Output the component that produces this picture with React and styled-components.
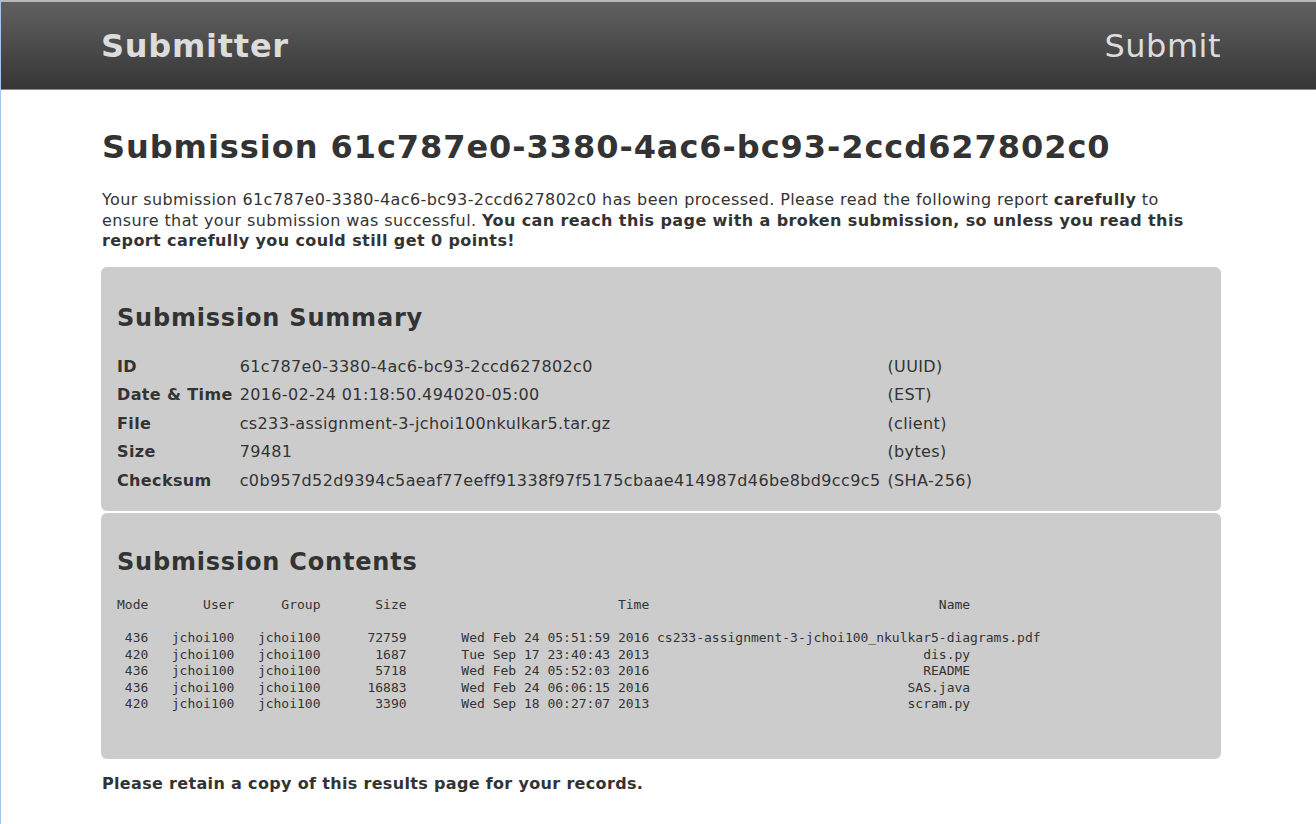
import React from 'react';
import styled, { createGlobalStyle } from 'styled-components';

const Global = createGlobalStyle`
  html, body { margin: 0; padding: 0; background: #fff; }
  body { font-family: "DejaVu Sans", Verdana, sans-serif; color: #333; }
`;

const Frame = styled.div`
  box-sizing: border-box;
  min-height: 824px;
  border-left: 1px solid #a4c6e8;
  border-top: 2px solid #b8b8b8;
`;

const Header = styled.header`
  height: 87px;
  background: linear-gradient(#606060, #363636);
  border-bottom: 1px solid #8a8a8a;
  display: flex;
  align-items: center;
`;

const Container = styled.div`
  width: 1120px;
  margin-left: 100px;
`;

const HeaderInner = styled(Container)`
  display: flex;
  justify-content: space-between;
  align-items: center;
`;

const Brand = styled.span`
  font-size: 32px;
  font-weight: bold;
  color: #dcdcdc;
  letter-spacing: 0.75px;
`;

const NavLink = styled.a`
  font-size: 32px;
  color: #dcdcdc;
  text-decoration: none;
  letter-spacing: 0.5px;
`;

const Title = styled.h1`
  margin: 37px 0 0;
  font-size: 32px;
  line-height: 40px;
  font-weight: bold;
  letter-spacing: 0.95px;
  padding-left: 1px;
`;

const Lead = styled.p`
  margin: 23px 0 0;
  padding: 0 12px 0 1px;
  font-size: 16px;
  line-height: 20.5px;
  letter-spacing: 0.4px;
`;

const Panel = styled.section`
  background: #cccccc;
  border-radius: 6px;
  padding: ${(p) => p.$pad};
  margin-top: ${(p) => p.$top};
`;

const PanelTitle = styled.h2`
  margin: 0;
  font-size: 24px;
  line-height: 28px;
  font-weight: bold;
  letter-spacing: 0.8px;
`;

const SummaryGrid = styled.div`
  display: grid;
  grid-template-columns: auto auto auto;
  justify-content: start;
  column-gap: 7px;
  margin-top: 21px;
  font-size: 16px;
  line-height: 28.5px;
  letter-spacing: 0.37px;
`;

const Label = styled.div`
  font-weight: bold;
`;

const Value = styled.div``;

const Listing = styled.pre`
  margin: 21px 0 0;
  font-family: "DejaVu Sans Mono", monospace;
  font-size: 13px;
  line-height: 16.5px;
  color: #333;
`;

const Footer = styled.p`
  margin: 15px 0 0;
  font-size: 16px;
  line-height: 20px;
  font-weight: bold;
  letter-spacing: 0.33px;
  padding-left: 1px;
`;

const summary = [
  ['ID', '61c787e0-3380-4ac6-bc93-2ccd627802c0', '(UUID)'],
  ['Date & Time', '2016-02-24 01:18:50.494020-05:00', '(EST)'],
  ['File', 'cs233-assignment-3-jchoi100nkulkar5.tar.gz', '(client)'],
  ['Size', '79481', '(bytes)'],
  ['Checksum', 'c0b957d52d9394c5aeaf77eeff91338f97f5175cbaae414987d46be8bd9cc9c5', '(SHA-256)'],
];

const files = [
  ['436', 'jchoi100', 'jchoi100', '72759', 'Wed Feb 24 05:51:59 2016', 'cs233-assignment-3-jchoi100_nkulkar5-diagrams.pdf'],
  ['420', 'jchoi100', 'jchoi100', '1687', 'Tue Sep 17 23:40:43 2013', 'dis.py'],
  ['436', 'jchoi100', 'jchoi100', '5718', 'Wed Feb 24 05:52:03 2016', 'README'],
  ['436', 'jchoi100', 'jchoi100', '16883', 'Wed Feb 24 06:06:15 2016', 'SAS.java'],
  ['420', 'jchoi100', 'jchoi100', '3390', 'Wed Sep 18 00:27:07 2013', 'scram.py'],
];

const fmt = (r) =>
  r[0].padStart(4) +
  r[1].padStart(11) +
  r[2].padStart(11) +
  r[3].padStart(11) +
  r[4].padStart(31) +
  ' ' +
  r[5].padStart(40);

const listing = [
  fmt(['Mode', 'User', 'Group', 'Size', 'Time', 'Name']),
  '',
  ...files.map(fmt),
].join('\n');

export default function App() {
  return (
    <Frame>
      <Global />
      <Header>
        <HeaderInner>
          <Brand>Submitter</Brand>
          <NavLink href="#">Submit</NavLink>
        </HeaderInner>
      </Header>
      <Container>
        <Title>Submission 61c787e0-3380-4ac6-bc93-2ccd627802c0</Title>
        <Lead>
          Your submission 61c787e0-3380-4ac6-bc93-2ccd627802c0 has been processed. Please read the
          following report <b>carefully</b> to ensure that your submission was successful.{' '}
          <b>
            You can reach this page with a broken submission, so unless you read this report
            carefully you could still get 0 points!
          </b>
        </Lead>
        <Panel $top="15px" $pad="37px 16px 16px">
          <PanelTitle>Submission Summary</PanelTitle>
          <SummaryGrid>
            {summary.map(([k, v, u]) => (
              <React.Fragment key={k}>
                <Label>{k}</Label>
                <Value>{v}</Value>
                <Value>{u}</Value>
              </React.Fragment>
            ))}
          </SummaryGrid>
        </Panel>
        <Panel $top="2px" $pad="35px 16px 46px">
          <PanelTitle>Submission Contents</PanelTitle>
          <Listing>{listing}</Listing>
        </Panel>
        <Footer>Please retain a copy of this results page for your records.</Footer>
      </Container>
    </Frame>
  );
}
